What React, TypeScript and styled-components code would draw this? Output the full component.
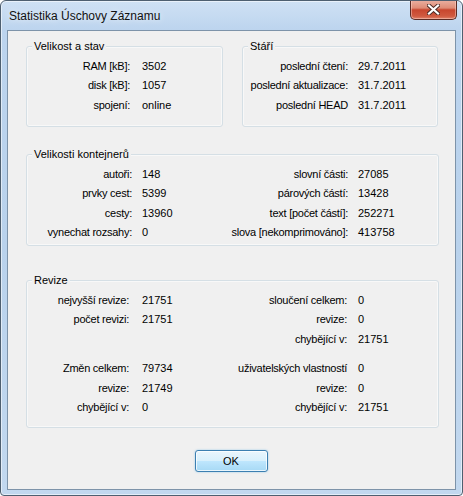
import React from "react";
import styled, { createGlobalStyle } from "styled-components";

const GlobalStyle = createGlobalStyle`
  html, body { margin: 0; padding: 0; background: #ffffff; }
  body {
    font-family: "Liberation Sans", Arial, sans-serif;
    font-size: 11px;
    color: #000;
  }
  * { box-sizing: border-box; }
`;

const Window = styled.div`
  width: 463px;
  height: 496px;
  display: flex;
  flex-direction: column;
  border: 1px solid #4e5f70;
  border-radius: 6px 6px 4px 4px;
  background: linear-gradient(
    180deg,
    #cfe1f4 0%,
    #bcd4ee 6%,
    #b9d2ec 50%,
    #c2d8ef 100%
  );
  box-shadow: inset 0 0 0 1px rgba(255, 255, 255, 0.55);
  overflow: hidden;
`;

const TitleBar = styled.div`
  height: 29px;
  flex: none;
  display: flex;
  align-items: center;
  padding-left: 8px;
`;

const Title = styled.div`
  font-size: 12px;
  color: #111;
  text-shadow: 0 0 6px rgba(255, 255, 255, 0.9);
`;

const CloseButton = styled.div`
  align-self: flex-start;
  margin: -1px 5px 0 auto;
  width: 47px;
  height: 20px;
  border: 1px solid #5a2b24;
  border-top: none;
  border-radius: 0 0 5px 5px;
  background: linear-gradient(
    180deg,
    #eab1a2 0%,
    #de8c76 42%,
    #c8462e 52%,
    #d05a40 85%,
    #e0826a 100%
  );
  box-shadow: inset 0 0 0 1px rgba(255, 220, 210, 0.45);
  display: flex;
  align-items: center;
  justify-content: center;
`;

const Client = styled.div`
  flex: 1;
  margin: 0 6px 5px 6px;
  border: 1px solid #7d93a9;
  background: #f0f0f0;
  padding: 15px 16px 0 18px;
  display: flex;
  flex-direction: column;
`;

const TopRow = styled.div`
  display: grid;
  grid-template-columns: 197px 196px;
  column-gap: 19px;
`;

const GroupBox = styled.div<{ $height: number; $mt?: number }>`
  position: relative;
  height: ${(p) => p.$height}px;
  margin-top: ${(p) => p.$mt ?? 0}px;
  border: 1px solid #d5dfe5;
  border-radius: 3px;
  padding-top: 9px;
  box-shadow: inset 0 0 0 1px rgba(255, 255, 255, 0.5);
`;

const Caption = styled.div`
  position: absolute;
  top: -8px;
  left: 5px;
  padding: 0 2px;
  line-height: 15px;
  background: #f0f0f0;
`;

const FieldGrid = styled.div<{ $cols: string; $mt?: number }>`
  display: grid;
  grid-template-columns: ${(p) => p.$cols};
  grid-auto-rows: 19.5px;
  align-items: center;
  margin-top: ${(p) => p.$mt ?? 0}px;
  white-space: nowrap;
`;

const Label = styled.div`
  text-align: right;
  letter-spacing: -0.25px;
`;

const Value = styled.div<{ $pad: number }>`
  padding-left: ${(p) => p.$pad}px;
`;

const ButtonRow = styled.div`
  display: flex;
  justify-content: center;
  margin-top: 22px;
  padding-right: 3px;
`;

const OkButton = styled.button`
  width: 73px;
  height: 22px;
  font-family: "Liberation Sans", Arial, sans-serif;
  font-size: 11px;
  color: #000;
  border: 1px solid #3c7fb1;
  border-radius: 3px;
  background: linear-gradient(
    180deg,
    #eaf6fd 0%,
    #d9f0fc 48%,
    #bee6fd 52%,
    #a7d9f5 100%
  );
  box-shadow: inset 0 0 0 1px rgba(255, 255, 255, 0.75),
    0 0 2px rgba(80, 170, 230, 0.6);
  padding: 0;
`;

type Pair = [string, string] | null;

function Fields(props: {
  cols: string;
  pads: number[];
  rows: Pair[][];
  mt?: number;
}) {
  return (
    <FieldGrid $cols={props.cols} $mt={props.mt}>
      {props.rows.map((row, i) =>
        row.map((pair, j) => (
          <React.Fragment key={`${i}-${j}`}>
            <Label>{pair ? pair[0] : ""}</Label>
            <Value $pad={props.pads[j]}>{pair ? pair[1] : ""}</Value>
          </React.Fragment>
        ))
      )}
    </FieldGrid>
  );
}

const CloseIcon = () => (
  <svg width="13" height="11" viewBox="0 0 13 11">
    <path
      d="M2 1.5 L11 9.5 M11 1.5 L2 9.5"
      stroke="#4a2a24"
      strokeWidth="4"
      strokeLinecap="square"
    />
    <path
      d="M2 1.5 L11 9.5 M11 1.5 L2 9.5"
      stroke="#ffffff"
      strokeWidth="2.2"
      strokeLinecap="square"
    />
  </svg>
);

export default function App() {
  return (
    <>
      <GlobalStyle />
      <Window>
        <TitleBar>
          <Title>Statistika Úschovy Záznamu</Title>
          <CloseButton>
            <CloseIcon />
          </CloseButton>
        </TitleBar>
        <Client>
          <TopRow>
            <GroupBox $height={81}>
              <Caption>Velikost a stav</Caption>
              <Fields
                cols="103px 1fr"
                pads={[12]}
                rows={[
                  [["RAM [kB]:", "3502"]],
                  [["disk [kB]:", "1057"]],
                  [["spojení:", "online"]],
                ]}
              />
            </GroupBox>
            <GroupBox $height={81}>
              <Caption>Stáří</Caption>
              <Fields
                cols="105px 1fr"
                pads={[10]}
                rows={[
                  [["poslední čtení:", "29.7.2011"]],
                  [["poslední aktualizace:", "31.7.2011"]],
                  [["poslední HEAD", "31.7.2011"]],
                ]}
              />
            </GroupBox>
          </TopRow>

          <GroupBox $height={92} $mt={27}>
            <Caption>Velikosti kontejnerů</Caption>
            <Fields
              cols="105px 96px 120px 89px"
              pads={[10, 10]}
              rows={[
                [["autoři:", "148"], ["slovní části:", "27085"]],
                [["prvky cest:", "5399"], ["párových částí:", "13428"]],
                [["cesty:", "13960"], ["text [počet částí]:", "252271"]],
                [
                  ["vynechat rozsahy:", "0"],
                  ["slova [nekomprimováno]:", "413758"],
                ],
              ]}
            />
          </GroupBox>

          <GroupBox $height={148} $mt={34}>
            <Caption>Revize</Caption>
            <Fields
              cols="102px 99px 119px 90px"
              pads={[13, 11]}
              rows={[
                [["nejvyšší revize:", "21751"], ["sloučení celkem:", "0"]],
                [["počet revizi:", "21751"], ["revize:", "0"]],
                [null, ["chybějící v:", "21751"]],
              ]}
            />
            <Fields
              cols="102px 99px 119px 90px"
              pads={[13, 11]}
              mt={10}
              rows={[
                [["Změn celkem:", "79734"], ["uživatelských vlastností", "0"]],
                [["revize:", "21749"], ["revize:", "0"]],
                [["chybějící v:", "0"], ["chybějící v:", "21751"]],
              ]}
            />
          </GroupBox>

          <ButtonRow>
            <OkButton>OK</OkButton>
          </ButtonRow>
        </Client>
      </Window>
    </>
  );
}
